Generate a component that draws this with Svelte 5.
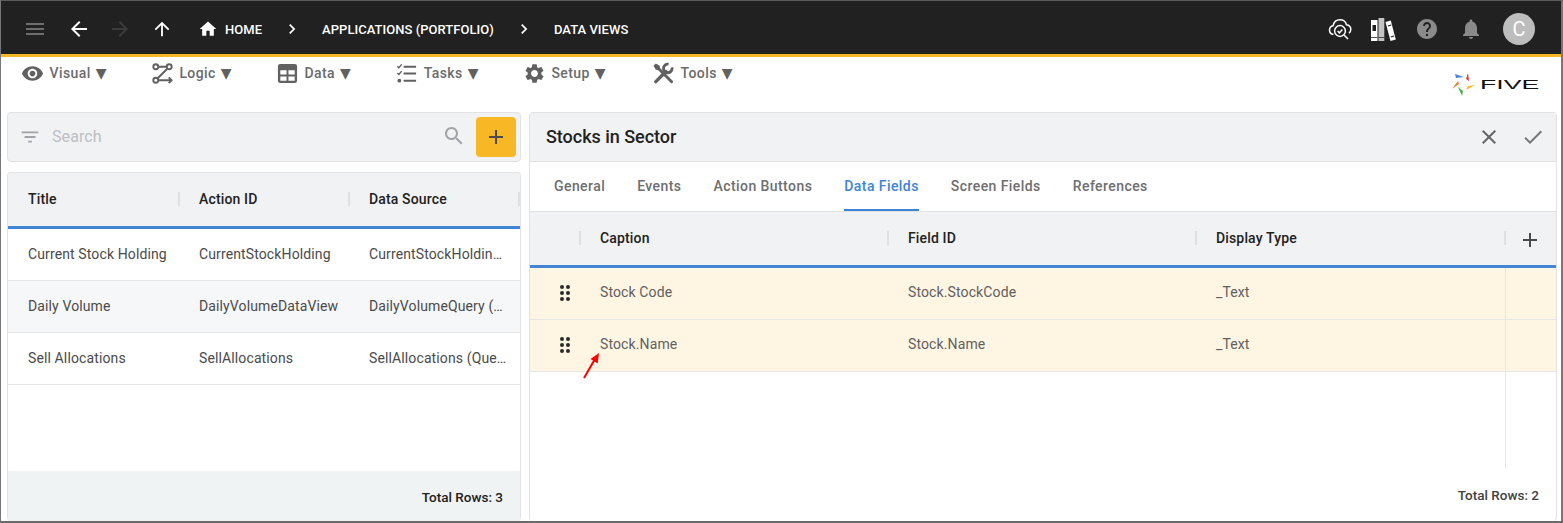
<script>
  const menus = [
    { label: 'Visual', icon: 'eye' },
    { label: 'Logic', icon: 'logic' },
    { label: 'Data', icon: 'data' },
    { label: 'Tasks', icon: 'tasks' },
    { label: 'Setup', icon: 'setup' },
    { label: 'Tools', icon: 'tools' }
  ]
  const actions = [
    ['Current Stock Holding', 'CurrentStockHolding', 'CurrentStockHoldingQuery (Query)'],
    ['Daily Volume', 'DailyVolumeDataView', 'DailyVolumeQuery (Query)'],
    ['Sell Allocations', 'SellAllocations', 'SellAllocations (Query)']
  ]
  const tabs = ['General', 'Events', 'Action Buttons', 'Data Fields', 'Screen Fields', 'References']
  const fields = [
    ['Stock Code', 'Stock.StockCode', '_Text'],
    ['Stock.Name', 'Stock.Name', '_Text']
  ]
</script>

<div class="frame">
  <header class="topbar">
    <svg class="ic menu" viewBox="0 0 24 24"><path d="M3 18h18v-2H3v2zm0-5h18v-2H3v2zm0-7v2h18V6H3z"/></svg>
    <svg class="ic back" viewBox="0 0 24 24"><path d="M20 11H7.830l5.590-5.590L12 4l-8 8 8 8 1.410-1.410L7.830 13H20v-2z"/></svg>
    <svg class="ic fwd" viewBox="0 0 24 24"><path d="M12 4l-1.410 1.410L16.170 11H4v2h12.170l-5.580 5.590L12 20l8-8z"/></svg>
    <svg class="ic up" viewBox="0 0 24 24"><path d="M4 12l1.410 1.410L11 7.830V20h2V7.830l5.580 5.590L20 12l-8-8-8 8z"/></svg>
    <svg class="ic home" viewBox="0 0 24 24"><path d="M10 20v-6h4v6h5v-8h3L12 3 2 12h3v8z"/></svg>
    <span class="crumb first">HOME</span>
    <svg class="ic chev" viewBox="0 0 24 24"><path d="M10 6L8.590 7.410 13.170 12l-4.580 4.590L10 18l6-6z"/></svg>
    <span class="crumb">APPLICATIONS (PORTFOLIO)</span>
    <svg class="ic chev" viewBox="0 0 24 24"><path d="M10 6L8.590 7.410 13.170 12l-4.580 4.590L10 18l6-6z"/></svg>
    <span class="crumb">DATA VIEWS</span>

    <div class="top-right">
      <svg class="ic cloud" viewBox="0 0 26 26" stroke="#fff" stroke-width="1.500">
        <path d="M6.500 18.500C4 18.200 2.500 16.300 2.500 14c0-2.200 1.500-3.900 3.600-4.300C6.800 6.500 9.400 3.800 13 3.800c3.300 0 5.800 2.100 6.500 5 2.500.3 4.300 2.200 4.300 4.700 0 1.500-.7 2.800-1.800 3.700"/>
        <circle cx="13" cy="15" r="5.400"/>
        <path d="M10.600 15l1.800 1.800 3-3.200M17 19l4 4"/>
      </svg>
      <svg class="ic books" viewBox="0 0 26 26">
        <path fill="#fff" d="M1 4h6.500v21H1z"/>
        <path fill="#c4c4c4" d="M8.500 2h5.800v23H8.500z"/>
        <path fill="#fff" d="M15.500 6l5.300-1.500 5 19-5.300 1.500z"/>
        <path fill="#212121" d="M2.500 9h3.500v6H2.500zM1 21h6.500v.8H1zM8.500 21h5.800v.8H8.500zM17.800 9.500l3.400-1 .3 1-3.400 1zM20.600 20.500l3.400-1 .3 1-3.400 1z"/>
      </svg>
      <svg class="ic help" viewBox="0 0 24 24"><path d="M12 2C6.480 2 2 6.480 2 12s4.480 10 10 10 10-4.480 10-10S17.520 2 12 2zm1 17h-2v-2h2v2zm2.070-7.750l-.9.920C13.450 12.900 13 13.500 13 15h-2v-.5c0-1.100.45-2.100 1.170-2.830l1.240-1.260c.37-.36.59-.86.59-1.410 0-1.100-.9-2-2-2s-2 .9-2 2H8c0-2.210 1.790-4 4-4s4 1.790 4 4c0 .88-.36 1.680-.93 2.250z"/></svg>
      <svg class="ic bell" viewBox="0 0 24 24"><path d="M12 22c1.100 0 2-.9 2-2h-4c0 1.100.89 2 2 2zm6-6v-5c0-3.070-1.640-5.640-4.500-6.320V4c0-.83-.67-1.500-1.500-1.500s-1.500.67-1.500 1.500v.68C7.630 5.360 6 7.920 6 11v5l-2 2v1h16v-1l-2-2z"/></svg>
      <div class="avatar">C</div>
    </div>
  </header>

  <nav class="toolbar">
    {#each menus as m}
      <div class="tool">
        <svg class="tool-ic" viewBox="0 0 24 24">
          {#if m.icon === 'eye'}
            <path d="M12 4.500C7 4.500 2.730 7.610 1 12c1.730 4.390 6 7.500 11 7.500s9.270-3.110 11-7.500c-1.730-4.390-6-7.500-11-7.500zM12 17c-2.760 0-5-2.240-5-5s2.240-5 5-5 5 2.240 5 5-2.240 5-5 5zm0-8c-1.660 0-3 1.340-3 3s1.340 3 3 3 3-1.340 3-3-1.340-3-3-3z"/>
          {:else if m.icon === 'logic'}
            <g fill="none" stroke="#616161" stroke-width="2">
              <circle cx="5" cy="5" r="2.600"/>
              <circle cx="19" cy="5" r="2.600"/>
              <circle cx="5" cy="19" r="2.600"/>
              <path d="M7.600 5h8.800M17 7L7 17M7.600 19H21.500M18.500 16l3 3-3 3"/>
            </g>
          {:else if m.icon === 'data'}
            <path fill-rule="evenodd" d="M4.500 2h15A2.500 2.500 0 0 1 22 4.500v15a2.500 2.500 0 0 1-2.500 2.500h-15A2.500 2.500 0 0 1 2 19.500v-15A2.500 2.500 0 0 1 4.500 2zM4.500 8.500v4.500h6.500V8.500zM13 8.500v4.500h6.500V8.500zM4.500 15v4.500h6.500V15zM13 15v4.500h6.500V15z"/>
          {:else if m.icon === 'tasks'}
            <g fill="none" stroke="#616161" stroke-width="2">
              <path d="M9 5h13M9 12h13M9 19.500h13"/>
              <path stroke-width="1.500" d="M2.500 4.500l1.500 1.500 3-3.500M2.500 11.500l1.500 1.500 3-3.500"/>
            </g>
            <circle cx="4.500" cy="19.500" r="2"/>
          {:else if m.icon === 'setup'}
            <path d="M19.140 12.940c.04-.3.06-.61.06-.94 0-.32-.02-.64-.07-.94l2.030-1.580c.18-.14.23-.41.12-.61l-1.920-3.320c-.12-.22-.37-.29-.59-.22l-2.390.96c-.5-.38-1.030-.7-1.620-.94l-.36-2.540c-.04-.24-.24-.41-.48-.41h-3.840c-.24 0-.43.17-.47.41l-.36 2.540c-.59.24-1.130.57-1.620.94l-2.390-.96c-.22-.08-.47 0-.59.22L2.740 8.870c-.12.21-.08.47.12.61l2.030 1.580c-.05.3-.09.63-.09.94s.02.64.07.94l-2.030 1.580c-.18.14-.23.41-.12.61l1.920 3.320c.12.22.37.29.59.22l2.390-.96c.5.38 1.030.7 1.620.94l.36 2.540c.05.24.24.41.48.41h3.840c.24 0 .44-.17.47-.41l.36-2.540c.59-.24 1.130-.56 1.620-.94l2.390.96c.22.08.47 0 .59-.22l1.920-3.320c.12-.22.07-.47-.12-.61l-2.010-1.580zM12 15.600c-1.980 0-3.600-1.620-3.600-3.600s1.620-3.600 3.600-3.600 3.600 1.620 3.600 3.600-1.620 3.600-3.600 3.600z"/>
          {:else}
            <g fill="none" stroke="#616161">
              <path stroke-width="3" d="M5 5l15.500 15.500" stroke-linecap="round"/>
              <path stroke-width="3.600" d="M4 20.500L14.500 10" stroke-linecap="round"/>
              <path stroke-width="3" d="M20.800 5.500a4.500 4.500 0 1 1-3.500-3.200"/>
            </g>
            <path d="M1.500 4L4 1.500l4 2.500.5 3L7 8.500l-3-.5z"/>
          {/if}
        </svg>
        <span>{m.label}</span>
        <span class="caret">▼</span>
      </div>
    {/each}

    <div class="logo">
      <svg width="26" height="26" viewBox="0 0 26 26">
        <polygon fill="#4a86d8" points="4,2 13,5 5,6"/>
        <polygon fill="#e53935" points="17,1 18,9 15,7"/>
        <polygon fill="#f9b825" points="24,13 15,18 17,14"/>
        <polygon fill="#4caf50" points="11,24 7,15 12,19"/>
        <polygon fill="#f57c32" points="1,17 7,9 8,12"/>
      </svg>
      <span class="five">FIVE</span>
    </div>
  </nav>

  <main class="panels">
    <section class="left">
      <div class="card searchbar">
        <svg class="ic filter" viewBox="0 0 24 24"><path d="M10 18h4v-2h-4v2zM3 6v2h18V6H3zm3 7h12v-2H6v2z"/></svg>
        <span class="placeholder">Search</span>
        <svg class="ic search" viewBox="0 0 24 24"><path d="M15.500 14h-.79l-.28-.27C15.410 12.590 16 11.110 16 9.500 16 5.910 13.090 3 9.500 3S3 5.910 3 9.500 5.910 16 9.500 16c1.610 0 3.090-.59 4.230-1.570l.27.28v.79l5 4.990L20.490 19l-4.990-5zm-6 0C7.010 14 5 11.990 5 9.500S7.010 5 9.500 5 14 7.010 14 9.500 11.990 14 9.500 14z"/></svg>
        <button class="add"><svg viewBox="0 0 24 24"><path d="M19 13h-6v6h-2v-6H5v-2h6V5h2v6h6v2z"/></svg></button>
      </div>

      <div class="card list">
        <div class="thead lcols">
          <div class="th">Title</div>
          <div class="th">Action ID</div>
          <div class="th">Data Source</div>
        </div>
        {#each actions as row, i}
          <div class="row lcols" class:hover={i === 1}>
            {#each row as cell}
              <div class="td">{cell}</div>
            {/each}
          </div>
        {/each}
        <div class="spacer"></div>
        <div class="list-foot">Total Rows: 3</div>
      </div>
    </section>

    <section class="card right">
      <div class="title-bar">
        <h1>Stocks in Sector</h1>
        <svg class="ic close" viewBox="0 0 24 24"><path d="M19 6.410L17.590 5 12 10.590 6.410 5 5 6.410 10.590 12 5 17.590 6.410 19 12 13.410 17.590 19 19 17.590 13.410 12z"/></svg>
        <svg class="ic check" viewBox="0 0 24 24"><path d="M9 16.170L4.830 12l-1.420 1.410L9 19 21 7l-1.410-1.410z"/></svg>
      </div>
      <div class="tabs">
        {#each tabs as t}
          <div class="tab" class:active={t === 'Data Fields'}>{t}</div>
        {/each}
      </div>
      <div class="thead rcols">
        <div class="th"></div>
        <div class="th">Caption</div>
        <div class="th">Field ID</div>
        <div class="th">Display Type</div>
        <div class="th plus"><svg viewBox="0 0 24 24"><path d="M19 13h-6v6h-2v-6H5v-2h6V5h2v6h6v2z"/></svg></div>
      </div>
      <div class="rbody">
        {#each fields as row}
          <div class="row rcols cream">
            <div class="td grip">
              <svg width="12" height="18" viewBox="0 0 12 18">
                {#each [3, 9, 15] as y}
                  <circle cx="3" cy={y} r="2"/>
                  <circle cx="9" cy={y} r="2"/>
                {/each}
              </svg>
            </div>
            {#each row as cell}
              <div class="td">{cell}</div>
            {/each}
            <div class="td last"></div>
          </div>
        {/each}
        <div class="filler"></div>
        <svg class="pointer" width="24" height="30" viewBox="0 0 24 30">
          <path d="M4 26L15 7" stroke="#f00" stroke-width="2" fill="none"/>
          <polygon fill="#f00" points="19,1 10.500,7 17.700,11.500"/>
        </svg>
      </div>
      <div class="right-foot">Total Rows: 2</div>
    </section>
  </main>
</div>

<style>
  :global(body) {
    margin: 0;
    background: #fff;
  }

  .frame {
    width: 1563px;
    height: 523px;
    box-sizing: border-box;
    border-left: 1px solid #777;
    border-top: 1px solid #5c5c5c;
    border-right: 2px solid #777;
    border-bottom: 2px solid #6a6a6a;
    display: flex;
    flex-direction: column;
    overflow: hidden;
    font-family: Roboto, "Liberation Sans", sans-serif;
    font-size: 14px;
    color: #616161;
  }

  .ic {
    width: 24px;
    height: 24px;
    flex: none;
    fill: currentColor;
  }

  /* top bar */
  .topbar {
    height: 56px;
    flex: none;
    box-sizing: border-box;
    background: #212121;
    border-bottom: 3px solid #f8b725;
    display: flex;
    align-items: center;
    padding: 3px 0 0 22px;
    color: #fff;
  }
  .menu { color: #6e6e6e; }
  .back { margin-left: 20px; }
  .fwd { margin-left: 17px; color: #3c3c3c; }
  .up { margin-left: 19px; width: 22px; height: 22px; }
  .home { margin-left: 25px; width: 20px; height: 20px; }
  .crumb {
    font-size: 13px;
    font-weight: 500;
    letter-spacing: 0.04px;
    white-space: nowrap;
  }
  .crumb.first { margin-left: 7px; }
  .chev { margin: 0 20px; width: 20px; height: 20px; }

  .top-right {
    margin-left: auto;
    display: flex;
    align-items: center;
    padding-right: 26px;
  }
  .cloud { width: 26px; height: 26px; fill: none; }
  .books { width: 26px; height: 26px; margin-left: 17px; }
  .help { margin-left: 19px; color: #8a8a8a; }
  .bell { margin-left: 20px; color: #8a8a8a; }
  .avatar {
    width: 32px;
    height: 32px;
    margin-left: 20px;
    border-radius: 50%;
    background: #bdbdbd;
    color: #fff;
    font-size: 20px;
    display: flex;
    align-items: center;
    justify-content: center;
  }

  /* toolbar */
  .toolbar {
    height: 55px;
    flex: none;
    box-sizing: border-box;
    display: flex;
    gap: 44.500px;
    padding: 5px 0 0 20px;
    position: relative;
    align-items: flex-start;
  }
  .tool {
    display: flex;
    align-items: center;
    height: 22px;
    font-weight: 500;
    letter-spacing: 0.4px;
    color: #6b6b6b;
  }
  .tool:nth-child(6) { margin-left: 2px; }
  .tool-ic {
    width: 23px;
    height: 23px;
    flex: none;
    fill: #616161;
    margin-right: 5.500px;
  }
  .caret {
    margin-left: 5px;
    font-family: "DejaVu Sans", sans-serif;
    font-size: 14px;
    letter-spacing: 0;
    color: #616161;
  }
  .logo {
    position: absolute;
    left: 1450px;
    top: 15px;
    display: flex;
    align-items: center;
  }
  .five {
    font-family: "Liberation Sans", sans-serif;
    font-size: 13px;
    line-height: 14px;
    color: #111;
    transform: scaleX(2.05);
    transform-origin: left center;
    margin-left: 3px;
  }

  /* panels */
  .panels {
    flex: 1;
    min-height: 0;
    display: grid;
    grid-template-columns: 514px 1028px;
    column-gap: 8px;
    padding-left: 6px;
  }
  .left {
    display: flex;
    flex-direction: column;
    gap: 10px;
    min-height: 0;
  }
  .card {
    box-sizing: border-box;
    border: 1px solid #e2e2e2;
    border-radius: 4px;
  }

  .searchbar {
    height: 50px;
    flex: none;
    background: #f1f2f4;
    display: flex;
    align-items: center;
    padding: 0 4px 0 11px;
  }
  .filter { color: #a0a4a8; width: 22px; height: 22px; }
  .placeholder {
    margin-left: 11px;
    font-size: 16px;
    letter-spacing: 0.1px;
    color: #bcbfc3;
    flex: 1;
    margin-bottom: 2px;
  }
  .search { color: #a0a4a8; margin-right: 10px; margin-bottom: 2px; }
  .add {
    width: 40px;
    height: 40px;
    padding: 8px;
    border: none;
    border-radius: 4px;
    background: #f8b725;
    fill: #4a4a4a;
  }
  .add svg { display: block; }

  .list {
    flex: 1;
    min-height: 0;
    display: flex;
    flex-direction: column;
    border-bottom: none;
    overflow: hidden;
  }
  .thead {
    height: 52px;
    padding-bottom: 1px;
    flex: none;
    box-sizing: content-box;
    background: #f1f2f4;
    border-bottom: 3px solid #4285d4;
    align-items: center;
  }
  .lcols {
    display: grid;
    grid-template-columns: 171px 170px 171px;
  }
  .rcols {
    display: grid;
    grid-template-columns: 50px 308px 308px 309px 51px;
  }
  .th {
    font-weight: 500;
    letter-spacing: 0.15px;
    color: #212121;
    padding-left: 20px;
    height: 14px;
    line-height: 14px;
    border-right: 2px solid #dfe0e2;
    margin-right: -1px;
    box-sizing: border-box;
    display: flex;
    align-items: center;
  }
  .thead .th:last-child { border-right: none; margin-right: 0; }
  .lcols .th:last-child { border-right: 2px solid #dfe0e2; }
  .plus {
    padding: 0;
    justify-content: center;
    overflow: visible;
  }
  .plus svg {
    width: 24px;
    height: 24px;
    flex: none;
    fill: #4a4a4a;
    margin: 3px 0 0 -1px;
  }

  .row {
    height: 52px;
    box-sizing: border-box;
    border-bottom: 1px solid #e6e6e6;
    align-items: center;
    flex: none;
  }
  .row.lcols { padding-bottom: 2px; }
  .row.rcols { padding-bottom: 4px; }
  .row.hover { background: #f6f7f9; }
  .row.cream { background: #fff5e3; }
  .td {
    padding-left: 20px;
    padding-right: 4px;
    white-space: nowrap;
    overflow: hidden;
    text-overflow: ellipsis;
    letter-spacing: 0.12px;
    color: #5f5f5f;
  }
  .lcols .td { color: #4a4a4a; }
  .lcols .td:last-child { padding-right: 12px; }
  .spacer { flex: 1; }
  .list-foot {
    height: 50px;
    flex: none;
    box-sizing: border-box;
    background: #eff3f3;
    display: flex;
    align-items: center;
    justify-content: flex-end;
    padding: 2px 17px 0 0;
    font-size: 13.500px;
    font-weight: 500;
    color: #212121;
  }

  .right {
    display: flex;
    flex-direction: column;
    border-bottom: none;
    min-height: 0;
  }
  .title-bar {
    height: 49px;
    flex: none;
    box-sizing: border-box;
    background: #f1f2f4;
    border-bottom: 1px solid #e2e2e2;
    display: flex;
    align-items: center;
    padding: 0 11px 0 16px;
  }
  h1 {
    flex: 1;
    margin: 0 0 2px;
    font-size: 18px;
    font-weight: 500;
    letter-spacing: -0.03px;
    color: #212121;
  }
  .close { color: #666; }
  .check { color: #777; margin-left: 20px; }

  .tabs {
    height: 50px;
    flex: none;
    box-sizing: border-box;
    border-bottom: 1px solid #e2e2e2;
    display: flex;
    gap: 32px;
    padding-left: 24px;
  }
  .tab {
    font-weight: 500;
    letter-spacing: 0.43px;
    color: #6e6e6e;
    display: flex;
    align-items: center;
    height: 49px;
    box-sizing: border-box;
    border-bottom: 2px solid transparent;
  }
  .tab.active {
    color: #3d84d6;
    border-bottom-color: #3d84d6;
  }

  .rbody {
    height: 200px;
    flex: none;
    display: flex;
    flex-direction: column;
    position: relative;
  }
  .grip {
    padding: 0 0 0 20px;
    display: flex;
    justify-content: center;
    fill: #2b2b2b;
    overflow: visible;
    margin-top: 2px;
  }
  .last {
    align-self: stretch;
    border-left: 1px solid #e6e6e6;
    padding: 0;
    margin-bottom: -4px;
  }
  .filler {
    flex: 1;
    margin-left: 975px;
    border-left: 1px solid #e6e6e6;
  }
  .pointer {
    position: absolute;
    left: 50px;
    top: 84px;
  }
  .right-foot {
    flex: 1;
    display: flex;
    align-items: center;
    justify-content: flex-end;
    padding: 1px 17px 0 0;
    font-size: 13.500px;
    font-weight: 500;
    color: #424242;
  }
</style>
